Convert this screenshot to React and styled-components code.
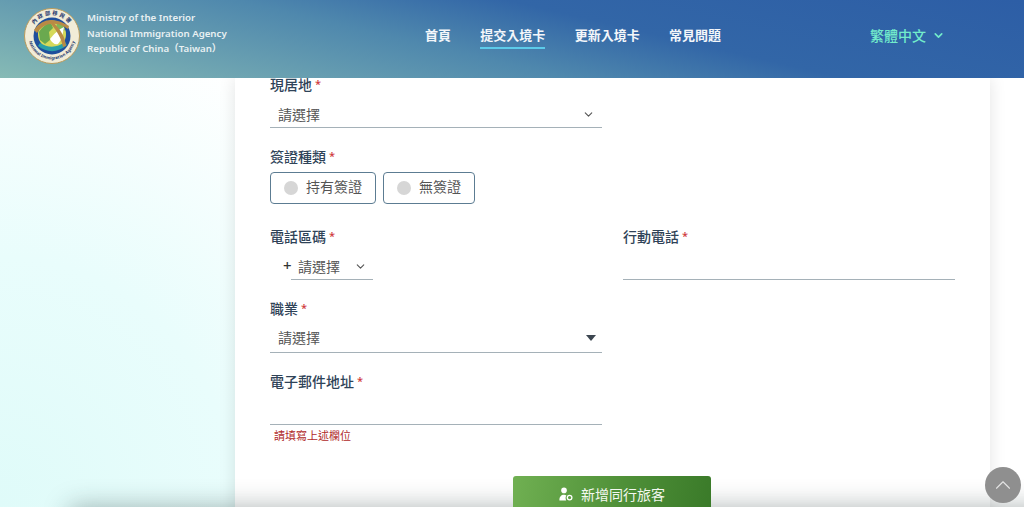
import React from 'react';
import styled, { createGlobalStyle } from 'styled-components';
import { ChevronDown, ChevronUp } from 'lucide-react';

const Global = createGlobalStyle`
  html, body {
    margin: 0;
    height: 507px;
    overflow: hidden;
  }
  body {
    font-family: 'Noto Sans', 'Noto Sans CJK TC', sans-serif;
    background: radial-gradient(ellipse 470px 500px at 0 100%, #dffbf9 0%, #e9fdfc 50%, #ffffff 100%), #fff;
  }
`;

const NAV = [
  { label: '首頁' },
  { label: '提交入境卡', active: true },
  { label: '更新入境卡' },
  { label: '常見問題' },
];

const Logo = () => (
  <LogoMark width="56" height="56" viewBox="0 0 56 56" aria-hidden="true">
    <defs>
      <path id="ringTop" d="M7 28a21 21 0 0 1 42 0" />
      <path id="ringBottom" d="M4.5 28a23.5 23.5 0 0 0 47 0" />
    </defs>
    <circle cx="28" cy="28" r="27.5" fill="#f1ecd8" stroke="#b99a5b" strokeWidth="1" />
    <text fontSize="5.4" fontWeight="700" fill="#26386e" fontFamily="Noto Sans CJK TC, sans-serif" letterSpacing="1.6">
      <textPath href="#ringTop" startOffset="50%" textAnchor="middle">內政部移民署</textPath>
    </text>
    <text fontSize="4.2" fontWeight="700" fill="#26386e" fontFamily="Noto Sans, sans-serif">
      <textPath href="#ringBottom" startOffset="50%" textAnchor="middle">National Immigration Agency</textPath>
    </text>
    <circle cx="28" cy="28" r="18.5" fill="#1f4f9c" />
    <circle cx="28" cy="26.5" r="14" fill="#d5d95a" />
    <path d="M15 24c3-5 8-9 12-9l2 5-4 4 1 8-5 4-5-4z" fill="#6aa94f" />
    <path d="M33 14c4 1 7 4 8 8l-5 3-4-3z" fill="#7db85a" />
    <path d="M14 38c9 7 20 7 29-1l-2-3c-8 6-17 6-25 1z" fill="#2ba0a8" />
    <path d="M26 31c4-5 9-10 14-12-1 6-2 13-6 17-3 1-6-1-8-5z" fill="#ffffff" />
    <path d="M10 22C18 10 31 9 45 18l-1 3C33 13 20 14 13 25z" fill="#b98a45" />
    <path d="M29 14c7 7 12 14 13 24l-3 1c-2-9-6-16-12-23z" fill="#b98a45" />
  </LogoMark>
);

const PersonIcon = () => (
  <svg width="14" height="14" viewBox="0 0 14 14" aria-hidden="true">
    <circle cx="5" cy="3.4" r="2.8" fill="#fff" />
    <path d="M0.4 13.4c0-3.8 1.8-5.6 4.6-5.6 1 0 1.8.2 2.4.6-.9.9-1.2 3.2-.2 5z" fill="#fff" />
    <circle cx="10.6" cy="10.6" r="2.3" fill="none" stroke="#fff" strokeWidth="1.3" />
  </svg>
);

const Field = ({ label, children, after }) => (
  <FieldBox $after={after}>
    <Label>
      {label}
      <Star>*</Star>
    </Label>
    {children}
  </FieldBox>
);

export default function App() {
  return (
    <>
      <Global />
      <Header>
        <Brand>
          <Logo />
          <BrandText>
            <div>Ministry of the Interior</div>
            <div>National Immigration Agency</div>
            <div>Republic of China（Taiwan）</div>
          </BrandText>
        </Brand>
        <Nav>
          {NAV.map((item) => (
            <NavItem key={item.label} $active={item.active}>
              {item.label}
            </NavItem>
          ))}
        </Nav>
        <Lang>
          繁體中文
          <ChevronDown size={13} strokeWidth={3} />
        </Lang>
      </Header>

      <Card>
        <Field label="現居地" after={22}>
          <Select $gap={12} $lift={2}>
            <span>請選擇</span>
            <ChevronDown size={13} strokeWidth={2} color="#555" />
          </Select>
        </Field>

        <Field label="簽證種類" after={26}>
          <Radios>
            <Radio><Dot />持有簽證</Radio>
            <Radio><Dot />無簽證</Radio>
          </Radios>
        </Field>

        <Columns>
          <Field label="電話區碼" after={22}>
            <PhoneRow>
              <Plus>+</Plus>
              <PhoneSelect>
                <span>請選擇</span>
                <ChevronDown size={13} strokeWidth={2} color="#555" />
              </PhoneSelect>
            </PhoneRow>
          </Field>
          <Field label="行動電話" after={22}>
            <Input />
          </Field>
        </Columns>

        <Field label="職業" after={22}>
          <Select $gap={13} $lift={5}>
            <span>請選擇</span>
            <Caret />
          </Select>
        </Field>

        <Field label="電子郵件地址" after={4}>
          <Input />
        </Field>
        <ErrorText>請填寫上述欄位</ErrorText>

        <Actions>
          <AddButton>
            <PersonIcon />
            新增同行旅客
          </AddButton>
        </Actions>
      </Card>

      <BottomShade />
      <ToTop>
        <ChevronUp size={26} strokeWidth={1} color="#e4e4e4" />
      </ToTop>
    </>
  );
}

const Header = styled.header`
  position: relative;
  z-index: 3;
  display: flex;
  align-items: center;
  height: 78px;
  padding-left: 24px;
  box-sizing: border-box;
  background: linear-gradient(13deg, #86bab5 0%, #4f88ad 42%, #3266a7 62%, #2d5ea6 100%);
`;

const Brand = styled.div`
  display: flex;
  align-items: center;
  gap: 7px;
  width: 203px;
  flex: none;
`;

const LogoMark = styled.svg`
  flex: none;
  margin-top: -6px;
`;

const BrandText = styled.div`
  margin-top: -11px;
  font-size: 9.7px;
  line-height: 15.5px;
  font-weight: 600;
  color: #e9f1f3;
  white-space: nowrap;
`;

const Nav = styled.nav`
  display: flex;
  gap: 29.3px;
  margin-left: 198px;
  margin-top: -8px;
`;

const NavItem = styled.a`
  padding: 5px 0 3px;
  font-size: 13px;
  line-height: 18px;
  font-weight: 700;
  color: #f3f6fa;
  border-bottom: 2px solid ${(props) => (props.$active ? '#5ccbea' : 'transparent')};
`;

const Lang = styled.div`
  display: flex;
  align-items: center;
  gap: 6px;
  margin-left: 149px;
  margin-top: -8px;
  font-size: 14px;
  font-weight: 500;
  color: #72ebcb;
`;

const Card = styled.main`
  width: 755px;
  margin-left: 235px;
  padding: 0 35px;
  height: 520px;
  box-sizing: border-box;
  background: #fff;
  box-shadow: 0 0 16px rgba(0, 0, 0, 0.11);
`;

const FieldBox = styled.div`
  width: 332px;
  margin-bottom: ${(props) => props.$after}px;
`;

const Label = styled.div`
  height: 14px;
  font-size: 14px;
  line-height: 14px;
  font-weight: 500;
  color: #2f4358;
`;

const Star = styled.span`
  margin-left: 3px;
  font-size: 11px;
  line-height: 0;
  color: #cf3a3a;
  vertical-align: 2px;
`;

const Select = styled.div`
  display: flex;
  align-items: center;
  justify-content: space-between;
  height: 24px;
  margin-top: ${(props) => props.$gap}px;
  padding: 0 7px ${(props) => props.$lift}px 8px;
  box-sizing: border-box;
  border-bottom: 1px solid #a5b1b8;
  font-size: 14px;
  line-height: 18px;
  color: #555;
`;

const Caret = styled.i`
  width: 0;
  height: 0;
  margin-right: -1px;
  border-left: 5px solid transparent;
  border-right: 5px solid transparent;
  border-top: 6px solid #3c4650;
`;

const Radios = styled.div`
  display: flex;
  gap: 7px;
  margin-top: 8px;
`;

const Radio = styled.label`
  display: flex;
  align-items: center;
  gap: 8px;
  height: 32px;
  padding: 0 13px 2px;
  box-sizing: border-box;
  border: 1px solid #5c7c92;
  border-radius: 4px;
  font-size: 14px;
  line-height: 18px;
  color: #555;
`;

const Dot = styled.span`
  width: 14px;
  height: 14px;
  margin-top: 2px;
  border-radius: 50%;
  background: #d6d6d6;
`;

const Columns = styled.div`
  display: flex;
  gap: 21px;
`;

const PhoneRow = styled.div`
  display: flex;
  align-items: flex-start;
  height: 24px;
  margin-top: 12px;
  padding-left: 13px;
`;

const Plus = styled.span`
  width: 8px;
  font-size: 15px;
  line-height: 18px;
  font-weight: 500;
  color: #333;
`;

const PhoneSelect = styled.div`
  display: flex;
  align-items: center;
  justify-content: space-between;
  width: 82px;
  height: 24px;
  padding: 0 6px 2px 7px;
  box-sizing: border-box;
  border-bottom: 1px solid #a5b1b8;
  font-size: 14px;
  line-height: 18px;
  color: #555;
`;

const Input = styled.div`
  height: 24px;
  margin-top: 12px;
  box-sizing: border-box;
  border-bottom: 1px solid #a5b1b8;
`;

const ErrorText = styled.div`
  padding-left: 4px;
  font-size: 11px;
  line-height: 14px;
  color: #b02a2a;
`;

const Actions = styled.div`
  display: flex;
  justify-content: center;
  margin-top: 33px;
  padding-right: 1px;
`;

const AddButton = styled.button`
  position: relative;
  z-index: 2;
  display: flex;
  align-items: center;
  justify-content: center;
  gap: 8px;
  width: 198px;
  height: 36px;
  padding: 0;
  border: 0;
  border-radius: 3px;
  font-family: inherit;
  font-size: 14px;
  color: #f4f8f0;
  background: linear-gradient(100deg, #70b052 0%, #4f9038 55%, #3a7a29 100%);
`;

const BottomShade = styled.div`
  position: fixed;
  z-index: 1;
  top: 507px;
  left: 70px;
  right: -40px;
  height: 40px;
  box-shadow: 0 0 26px rgba(30, 50, 50, 0.36);
`;

const ToTop = styled.div`
  position: fixed;
  z-index: 4;
  left: 985px;
  top: 467px;
  display: flex;
  align-items: center;
  justify-content: center;
  width: 36px;
  height: 36px;
  border-radius: 50%;
  background: #8f8f8f;
`;
